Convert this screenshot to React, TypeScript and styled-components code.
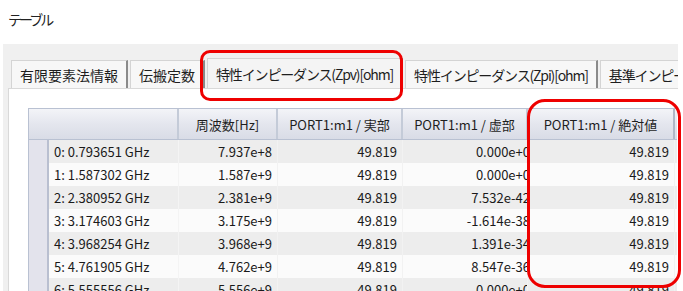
import styled, { createGlobalStyle } from 'styled-components'

const GlobalStyle = createGlobalStyle`
  html, body {
    margin: 0;
    padding: 0;
    background: #ffffff;
    overflow: hidden;
  }
  body {
    font-family: "Noto Sans CJK JP", "Noto Sans", sans-serif;
    color: #1a1a1a;
  }
`

const Page = styled.div`
  position: relative;
  width: 683px;
  height: 291px;
  overflow: hidden;
  background: #ffffff;
`

const Title = styled.div`
  height: 44px;
  padding: 9px 0 0 8px;
  box-sizing: border-box;
  font-size: 14px;
  line-height: 20px;
  letter-spacing: -3px;
  color: #222;
`

const Frame = styled.div`
  margin-left: 3px;
  width: 675px;
  height: 247px;
  background: #f0f0f0;
  padding-top: 14px;
  box-sizing: border-box;
  display: flex;
  flex-direction: column;
`

const TabBar = styled.div`
  display: flex;
  align-items: flex-end;
  height: 30px;
  padding-left: 8px;
  gap: 2px;
  overflow: hidden;
`

const Tab = styled.div<{ $active?: boolean; $tight?: boolean }>`
  flex-shrink: 0;
  height: ${(p) => (p.$active ? '30px' : '28px')};
  padding: 0 8px;
  display: flex;
  align-items: center;
  font-size: 14px;
  letter-spacing: ${(p) => (p.$tight ? '-1.15px' : '0')};
  white-space: nowrap;
  background: ${(p) => (p.$active ? '#f4f4f4' : '#f7f7f7')};
  border: 1px solid #d4d4d4;
  border-bottom: none;
  border-right: 2px solid #8a8a8a;
  box-sizing: border-box;
  color: #1e1e1e;
`

const Panel = styled.div`
  flex: 1;
  margin-left: 5px;
  background: #ffffff;
  border-top: 1px solid #d9d9d9;
  border-left: 1px solid #d9d9d9;
  padding: 19px 0 0 19px;
  overflow: hidden;
`

const Table = styled.div`
  width: 648px;
  border-top: 1px solid #b9c1d2;
  border-left: 1px solid #b9c1d2;
  font-size: 13px;
`

const Row = styled.div<{ $alt?: boolean }>`
  display: grid;
  grid-template-columns: 20px 130px 99px 125px 125px 147px;
  height: 23px;
  background: ${(p) => (p.$alt ? '#fbfbfb' : '#ededed')};
`

const HeadRow = styled.div`
  display: grid;
  grid-template-columns: 150px 99px 125px 125px 147px;
  height: 30px;
  background: linear-gradient(#f3f4f8, #e4e6ee 50%, #d9dce6);
  border-bottom: 1px solid #b9c1d2;
`

const HeadCell = styled.div`
  display: flex;
  align-items: center;
  justify-content: center;
  border-right: 2px solid #c4cbd8;
  white-space: nowrap;
  overflow: hidden;
  color: #1e1e1e;
  &:last-child {
    border-right: 2px solid #b0b7c6;
  }
`

const Gutter = styled.div`
  background: #e3e3ec;
  border-right: 2px solid #b9bfd0;
`

const Label = styled.div`
  display: flex;
  align-items: center;
  padding-left: 5px;
  white-space: nowrap;
  border-right: 1px solid #f4f4f4;
`

const Cell = styled.div<{ $clip?: boolean }>`
  display: flex;
  align-items: center;
  justify-content: flex-end;
  padding-right: ${(p) => (p.$clip ? '0' : '5px')};
  white-space: nowrap;
  overflow: hidden;
  border-right: 1px solid #f2f2f2;
  span {
    margin-right: ${(p) => (p.$clip ? '-3px' : '0')};
  }
`

const Marker = styled.div`
  position: absolute;
  border: 3px solid #ee0000;
  box-sizing: border-box;
  pointer-events: none;
`

const TabMarker = styled(Marker)`
  left: 200px;
  top: 50px;
  width: 203px;
  height: 51px;
  border-radius: 10px;
`

const ColMarker = styled(Marker)`
  left: 527px;
  top: 99px;
  width: 154px;
  height: 189px;
  border-radius: 18px;
`

const tabs = [
  '有限要素法情報',
  '伝搬定数',
  '特性インピーダンス(Zpv)[ohm]',
  '特性インピーダンス(Zpi)[ohm]',
  '基準インピーダンス',
]

const rows = [
  ['0: 0.793651 GHz', '7.937e+8', '49.819', '0.000e+0', '49.819'],
  ['1: 1.587302 GHz', '1.587e+9', '49.819', '0.000e+0', '49.819'],
  ['2: 2.380952 GHz', '2.381e+9', '49.819', '7.532e-42', '49.819'],
  ['3: 3.174603 GHz', '3.175e+9', '49.819', '-1.614e-38', '49.819'],
  ['4: 3.968254 GHz', '3.968e+9', '49.819', '1.391e-34', '49.819'],
  ['5: 4.761905 GHz', '4.762e+9', '49.819', '8.547e-36', '49.819'],
  ['6: 5.555556 GHz', '5.556e+9', '49.819', '0.000e+0', '49.819'],
]

export default function App() {
  return (
    <Page>
      <GlobalStyle />
      <Title>テーブル</Title>
      <Frame>
        <TabBar>
          {tabs.map((t, i) => (
            <Tab key={t} $active={i === 2} $tight={i >= 2}>{t}</Tab>
          ))}
        </TabBar>
        <Panel>
          <Table>
            <HeadRow>
              <HeadCell />
              <HeadCell>周波数[Hz]</HeadCell>
              <HeadCell>PORT1:m1 / 実部</HeadCell>
              <HeadCell>PORT1:m1 / 虚部</HeadCell>
              <HeadCell>PORT1:m1 / 絶対値</HeadCell>
            </HeadRow>
            {rows.map((r, i) => (
              <Row key={r[0]} $alt={i % 2 === 1}>
                <Gutter />
                <Label>{r[0]}</Label>
                <Cell><span>{r[1]}</span></Cell>
                <Cell><span>{r[2]}</span></Cell>
                <Cell $clip><span>{r[3]}</span></Cell>
                <Cell><span>{r[4]}</span></Cell>
              </Row>
            ))}
          </Table>
        </Panel>
      </Frame>
      <TabMarker />
      <ColMarker />
    </Page>
  )
}
